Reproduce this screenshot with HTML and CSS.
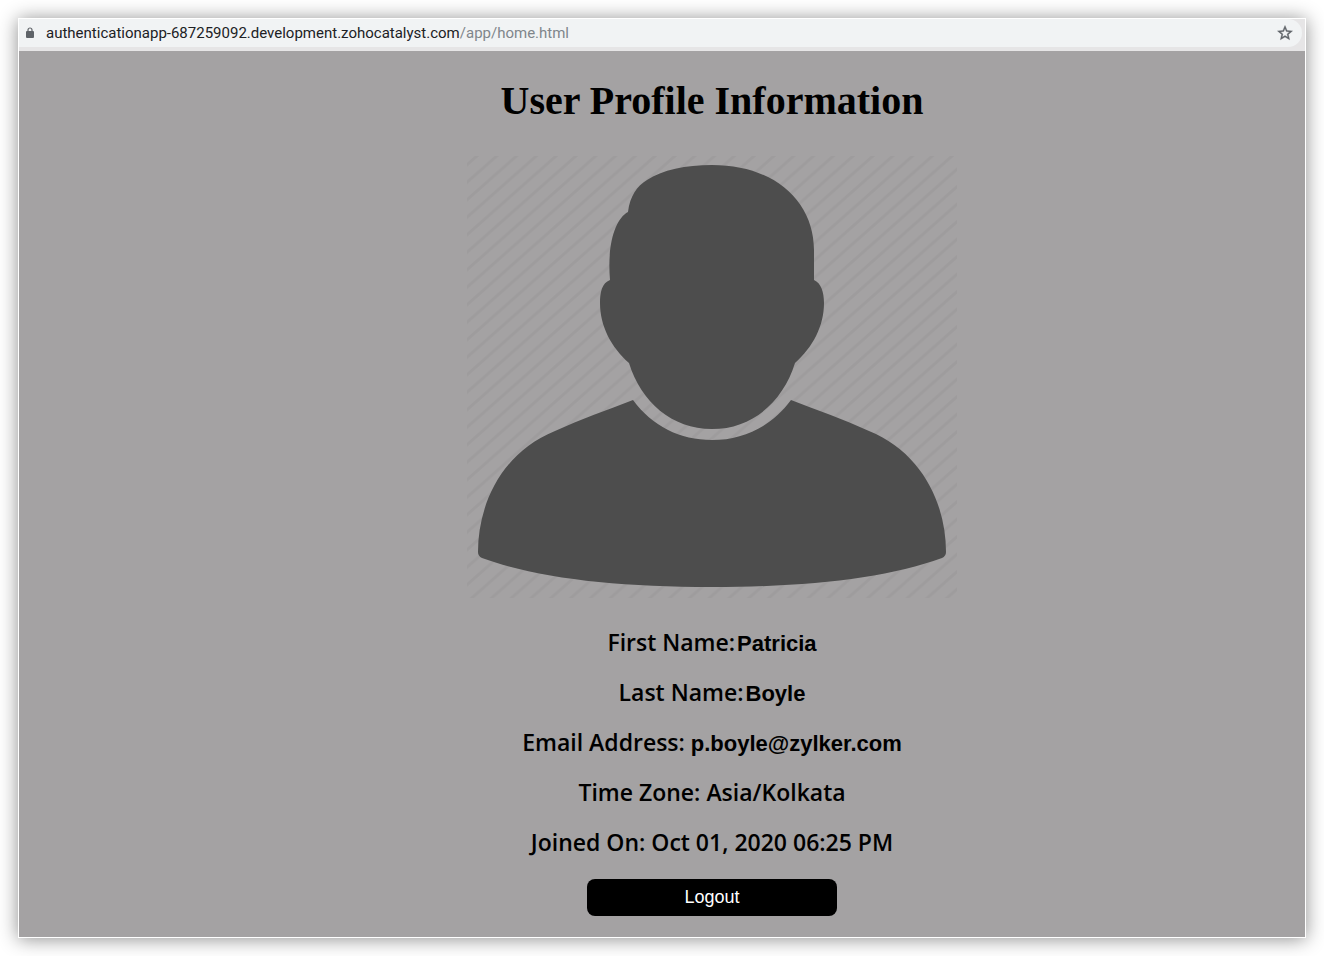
FILE: index.html
```html
<!DOCTYPE html>
<html lang="en">
<head>
  <meta charset="UTF-8">
  <title>User Profile Information</title>
  <link rel="stylesheet" href="styles.css">
</head>
<body>
  <div class="window">
    <header class="toolbar">
      <div class="address-bar">
        <svg class="lock" viewBox="0 0 10 12" aria-hidden="true">
          <path d="M3 5V3a2 2 0 0 1 4 0v2" fill="none" stroke="#5f6368" stroke-width="1.2"/>
          <rect x="1" y="4" width="8" height="7" rx="1" fill="#5f6368"/>
        </svg>
        <div class="url">authenticationapp-687259092.development.zohocatalyst.com<span class="path">/app/home.html</span></div>
        <button type="button" class="star" aria-label="Bookmark this page">
          <svg viewBox="0 0 24 24" aria-hidden="true">
            <path fill="#5f6368" stroke="#5f6368" stroke-width=".5" d="M22 9.24l-7.19-.62L12 2 9.19 8.63 2 9.24l5.46 4.73L5.82 21 12 17.27 18.18 21l-1.63-7.03L22 9.24zM12 15.4l-3.76 2.27 1-4.28-3.32-2.88 4.38-.38L12 6.1l1.71 4.04 4.38.38-3.32 2.88 1 4.28L12 15.4z"/>
          </svg>
        </button>
      </div>
    </header>

    <main class="profile">
      <h1>User Profile Information</h1>
      <svg class="avatar" viewBox="0 0 490 442" role="img" aria-label="Profile picture">
        <defs>
          <pattern id="stripes" width="19.8" height="17.5" patternUnits="userSpaceOnUse">
            <path d="M-12 19.36L12 -1.86M7.8 19.36L31.8 -1.86" fill="none" stroke="#9e9c9d" stroke-width="3"/>
          </pattern>
        </defs>
        <rect width="490" height="442" fill="url(#stripes)"/>
        <g fill="#4d4d4d">
          <path d="M245 9C308 9 347 46 347 94V124C354 127 357 136 357 147C357 170 346 191 328 207C316 246 285 273 245 273C205 273 174 246 162 207C144 191 133 170 133 147C133 136 135 127 143 124C140 89 148 63 161 56C163 40 170 30 180 24C195 14 219 9 245 9Z"/>
          <path d="M166 244C185 270 213 284 245 284C277 284 305 270 324 244C350 254 376 263 402 275C456 297 479 349 479 396Q479 400 475 402C420 422 342 431 245 431C148 431 70 422 15 402Q11 400 11 396C11 349 34 297 88 275C114 263 140 254 166 244Z"/>
        </g>
      </svg>

      <p>First Name:<span class="value tight">Patricia</span></p>
      <p>Last Name:<span class="value tight">Boyle</span></p>
      <p>Email Address: <span class="value">p.boyle@zylker.com</span></p>
      <p>Time Zone: Asia/Kolkata</p>
      <p>Joined On: Oct 01, 2020 06:25 PM</p>
      <button type="button" class="logout">Logout</button>
    </main>
  </div>
</body>
</html>
```

FILE: styles.css
```css
* {
  box-sizing: border-box;
}
body {
  margin: 0;
  padding: 18px;
  background-color: #fff;
}
.window {
  display: flex;
  flex-direction: column;
  min-height: calc(100vh - 36px);
  border: 1px solid #fff;
  background-color: #a4a2a3;
  box-shadow: 0 1px 18px rgba(0,0,0,0.45);
}
.toolbar {
  padding-bottom: 4px;
  background-color: #e6e5e6;
}
.address-bar {
  display: flex;
  align-items: center;
  height: 28px;
  margin-right: 3px;
  padding: 0 8px 0 6px;
  background-color: #f1f3f4;
  border-radius: 0 14px 14px 0;
  font-family: Roboto, sans-serif;
  font-size: 15px;
  color: #202124;
}
.lock {
  width: 10px;
  height: 12px;
}
.url {
  flex: 1;
  margin-left: 11px;
}
.path {
  color: #80868b;
}
.star {
  width: 18px;
  height: 18px;
  padding: 0;
  border: none;
  background: none;
  cursor: pointer;
}
.star svg {
  display: block;
}
.profile {
  display: flex;
  flex-direction: column;
  align-items: center;
  padding: 26px 0 20px 100px;
  font-family: "Open Sans", sans-serif;
  font-size: 23px;
  font-weight: 600;
  line-height: 26px;
  color: #000;
}
h1 {
  margin: 0 0 31px;
  font-family: "Liberation Serif", serif;
  font-size: 40px;
  font-weight: bold;
  line-height: 48px;
}
.avatar {
  width: 490px;
  max-width: 100%;
  margin-bottom: 31px;
}
p {
  margin: 0 0 24px;
}
.value {
  font-family: "Liberation Sans", Arial, sans-serif;
  font-size: 22px;
  font-weight: bold;
  line-height: 20px;
}
.tight {
  margin-left: 2px;
}
.logout {
  width: 250px;
  height: 37px;
  border: none;
  border-radius: 8px;
  background-color: #000;
  color: #fff;
  font-family: "Liberation Sans", Arial, sans-serif;
  font-size: 18px;
  cursor: pointer;
}
```
